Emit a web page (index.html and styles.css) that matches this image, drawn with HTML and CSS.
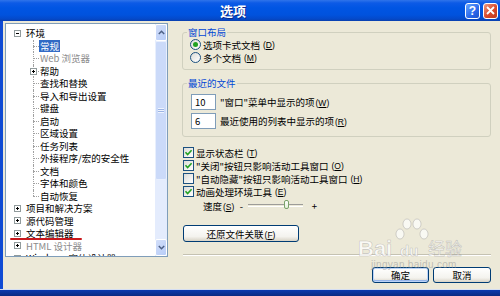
FILE: index.html
```html
<!DOCTYPE html>
<html>
<head>
  <meta charset="UTF-8">
  <meta name="viewport" content="width=device-width, initial-scale=1.0">
  <title>选项</title>
  <link rel="stylesheet" href="styles.css">
</head>
<body>
  <div class="window">
    <div class="titlebar">
      <span class="title">选项</span>
      <div class="caption-btns">
        <span class="cap-btn help">?</span>
        <span class="cap-btn close">
          <svg width="9" height="9" viewBox="0 0 9 9"><path d="M1 1 L8 8 M8 1 L1 8" stroke="#fff" stroke-width="1.8"/></svg>
        </span>
      </div>
    </div>

    <div class="client">
      <div class="main">
        <div class="tree">
          <ul class="tree-list">
            <li class="node"><span class="exp"></span><span class="label">环境</span></li>
            <li>
              <ul class="children">
                <li class="child"><span class="label selected">常规</span></li>
                <li class="child"><span class="label grey">Web 浏览器</span></li>
                <li class="child"><span class="exp plus"></span><span class="label">帮助</span></li>
                <li class="child"><span class="label">查找和替换</span></li>
                <li class="child"><span class="label">导入和导出设置</span></li>
                <li class="child"><span class="label">键盘</span></li>
                <li class="child"><span class="label">启动</span></li>
                <li class="child"><span class="label">区域设置</span></li>
                <li class="child"><span class="label">任务列表</span></li>
                <li class="child"><span class="label">外接程序/宏的安全性</span></li>
                <li class="child"><span class="label">文档</span></li>
                <li class="child"><span class="label">字体和颜色</span></li>
                <li class="child last"><span class="label">自动恢复</span></li>
              </ul>
            </li>
            <li class="node"><span class="exp plus"></span><span class="label">项目和解决方案</span></li>
            <li class="node"><span class="exp plus"></span><span class="label">源代码管理</span></li>
            <li class="node marked"><span class="exp plus"></span><span class="label">文本编辑器</span></li>
            <li class="node"><span class="exp plus"></span><span class="label grey">HTML 设计器</span></li>
            <li class="node"><span class="exp plus"></span><span class="label">Windows 窗体设计器</span></li>
          </ul>
          <div class="scrollbar">
            <div class="sb-btn">
              <svg width="7" height="5" viewBox="0 0 7 5"><path d="M0.8 4 L3.5 1.3 L6.2 4" stroke="#4d6185" stroke-width="1.5" fill="none"/></svg>
            </div>
            <div class="sb-thumb"><span class="grip"></span></div>
            <div class="sb-track"></div>
            <div class="sb-btn">
              <svg width="7" height="5" viewBox="0 0 7 5"><path d="M0.8 1 L3.5 3.7 L6.2 1" stroke="#4d6185" stroke-width="1.5" fill="none"/></svg>
            </div>
          </div>
        </div>

        <div class="panel">
          <fieldset class="group">
            <legend>窗口布局</legend>
            <div class="radio-row"><span class="rb on"></span>选项卡式文档<span class="key">(<u>D</u>)</span></div>
            <div class="radio-row"><span class="rb"></span>多个文档<span class="key">(<u>M</u>)</span></div>
          </fieldset>

          <fieldset class="group recent">
            <legend>最近的文件</legend>
            <div class="num-rows">
              <div class="num-row"><input class="num" type="text" value="10" readonly><span>"窗口"菜单中显示的项<span class="key">(<u>W</u>)</span></span></div>
              <div class="num-row"><input class="num" type="text" value="6" readonly><span>最近使用的列表中显示的项<span class="key">(<u>R</u>)</span></span></div>
            </div>
          </fieldset>

          <div class="checks">
            <div class="check-row"><span class="cb on"><svg width="9" height="9" viewBox="0 0 9 9"><path d="M1.5 4.3 L3.6 6.5 L7.6 2.2" stroke="#21a121" stroke-width="1.6" fill="none"/></svg></span>显示状态栏<span class="key">(<u>T</u>)</span></div>
            <div class="check-row"><span class="cb on"><svg width="9" height="9" viewBox="0 0 9 9"><path d="M1.5 4.3 L3.6 6.5 L7.6 2.2" stroke="#21a121" stroke-width="1.6" fill="none"/></svg></span>"关闭"按钮只影响活动工具窗口<span class="key">(<u>O</u>)</span></div>
            <div class="check-row"><span class="cb"></span>"自动隐藏"按钮只影响活动工具窗口<span class="key">(<u>H</u>)</span></div>
            <div class="check-row"><span class="cb on"><svg width="9" height="9" viewBox="0 0 9 9"><path d="M1.5 4.3 L3.6 6.5 L7.6 2.2" stroke="#21a121" stroke-width="1.6" fill="none"/></svg></span>动画处理环境工具<span class="key">(<u>E</u>)</span></div>
            <div class="speed-row">
              <span>速度<span class="key">(<u>S</u>)</span></span>
              <span class="sign">-</span>
              <div class="slider"><span class="slider-thumb"></span></div>
              <span class="sign">+</span>
            </div>
          </div>

          <button class="btn restore">还原文件关联<span class="key">(<u>F</u>)</span></button>
          <div class="separator"></div>
        </div>
      </div>

      <div class="footer">
        <button class="btn dlg default">确定</button>
        <button class="btn dlg">取消</button>
      </div>
    </div>

    <div class="frame-bottom"></div>

    <div class="watermark">
      <svg class="paw" width="36" height="26" viewBox="0 0 36 26">
        <ellipse cx="6" cy="16" rx="4" ry="5" />
        <ellipse cx="13" cy="6" rx="4" ry="5" />
        <ellipse cx="23" cy="6" rx="4" ry="5" />
        <ellipse cx="30" cy="16" rx="4" ry="5" />
      </svg>
      <span class="wm-bai">Bai</span><span class="wm-du">du</span><span class="wm-jy">经验</span>
      <span class="wm-url">jingyan.baidu.com</span>
    </div>
  </div>
</body>
</html>
```

FILE: styles.css
```css
body {
  margin: 0;
  width: 500px;
  height: 296px;
  overflow: hidden;
  font-family: "Noto Sans CJK SC", "Liberation Sans", sans-serif;
  font-size: 9.5px;
  color: #000;
}

.window {
  position: relative;
  height: 296px;
  display: flex;
  flex-direction: column;
  background: #ece9d8;
}

/* title bar */
.titlebar {
  height: 21px;
  flex-shrink: 0;
  display: flex;
  align-items: center;
  padding-left: 220px;
  box-sizing: border-box;
  background: linear-gradient(#2f74ea 0, #0c5ae6 3px, #0055e3 8px, #0052dd 15px, #0449c9 19px, #0a3fae 21px);
}
.title {
  color: #fff;
  font-weight: bold;
  font-size: 13px;
  line-height: 21px;
  text-shadow: 1px 1px 0 #0b2a8c;
}
.caption-btns {
  margin-left: auto;
  display: flex;
  gap: 3px;
  padding-right: 2px;
}
.cap-btn {
  width: 15px;
  height: 16px;
  box-sizing: border-box;
  border: 1px solid #fff;
  border-radius: 3px;
  display: flex;
  align-items: center;
  justify-content: center;
  color: #fff;
  font: bold 12px "Liberation Sans", sans-serif;
}
.help {
  background: linear-gradient(135deg, #6aa6ff, #2a68ea 60%, #1d52cc);
}
.close {
  background: linear-gradient(135deg, #eb9a83, #d9492c 55%, #bf3a1f);
}

/* mnemonic key, e.g. (D) */
.key {
  font-family: "Liberation Sans", sans-serif;
  font-size: 8.5px;
  margin-left: 1px;
}

/* client area */
.client {
  flex: 1;
  min-height: 0;
  display: flex;
  flex-direction: column;
  border-left: 3px solid #0f4bd4;
}
.main {
  display: flex;
  gap: 14px;
  padding: 2px 0 0 2px;
}

/* tree */
.tree {
  width: 163px;
  height: 234px;
  box-sizing: border-box;
  border: 1px solid #7f9db9;
  background: #fff;
  display: flex;
  overflow: hidden;
}
.tree-list {
  flex: 1;
  list-style: none;
  margin: 0;
  padding: 3px 0 0 8px;
}
.tree-list li {
  line-height: 12.5px;
}
.node {
  display: flex;
  align-items: center;
  height: 12.5px;
  white-space: nowrap;
}
.label {
  padding: 0 1px;
  white-space: nowrap;
}
.node .label {
  margin-left: 4px;
}
.label.selected {
  background: #316ac5;
  color: #fff;
}
.label.grey {
  color: #8c8c8c;
}
.exp {
  position: relative;
  width: 7px;
  height: 7px;
  box-sizing: border-box;
  border: 1px solid #919b9c;
  background: #fff;
  flex-shrink: 0;
}
.exp::before {
  content: "";
  position: absolute;
  left: 1px;
  top: 2px;
  width: 3px;
  height: 1px;
  background: #000;
}
.exp.plus::after {
  content: "";
  position: absolute;
  left: 2px;
  top: 1px;
  width: 1px;
  height: 3px;
  background: #000;
}
.children {
  list-style: none;
  margin: 0 0 0 19px;
  padding: 0;
}
.child {
  position: relative;
  height: 12.5px;
  padding-left: 6px;
  display: flex;
  align-items: center;
}
.child::before {
  content: "";
  position: absolute;
  left: 0;
  top: 0;
  bottom: 0;
  border-left: 1px dotted #a0a0a0;
}
.child.last::before {
  bottom: 50%;
}
.child::after {
  content: "";
  position: absolute;
  left: 0;
  top: 50%;
  width: 6px;
  border-top: 1px dotted #a0a0a0;
}
.child .exp {
  position: absolute;
  left: -3px;
  top: 3px;
  z-index: 1;
}
.marked {
  position: relative;
}
.marked::after {
  content: "";
  position: absolute;
  left: -4px;
  top: 11px;
  width: 72px;
  height: 2px;
  border-radius: 1px;
  background: #c8181c;
}

/* scrollbar */
.scrollbar {
  width: 12px;
  display: flex;
  flex-direction: column;
  background: #e4ecfd;
}
.sb-btn {
  height: 17px;
  flex-shrink: 0;
  box-sizing: border-box;
  border: 1px solid #fff;
  border-radius: 2px;
  background: linear-gradient(135deg, #d2def9, #b8cdf8);
  display: flex;
  align-items: center;
  justify-content: center;
}
.sb-thumb {
  height: 139px;
  box-sizing: border-box;
  border: 1px solid #e8effd;
  border-radius: 2px;
  background: #cbdaf9;
  display: flex;
  align-items: center;
  justify-content: center;
}
.grip {
  width: 6px;
  height: 5px;
  background: repeating-linear-gradient(#eef3fd 0 1px, #9cb4e4 1px 2px);
}
.sb-track {
  flex: 1;
}

/* right panel */
.panel {
  width: 309px;
  display: flex;
  flex-direction: column;
  padding-top: 3px;
}
.group {
  margin: 0;
  padding: 0 7px 5px 7px;
  border: 1px solid #d0d0bf;
  border-radius: 3px;
  min-width: 0;
}
.group legend {
  padding: 0 1px;
  margin-left: -3px;
  color: #0046d5;
  line-height: 12px;
}
.radio-row {
  display: flex;
  align-items: center;
  gap: 2px;
  height: 13px;
  white-space: nowrap;
}
.rb {
  position: relative;
  width: 11px;
  height: 11px;
  box-sizing: border-box;
  border: 1px solid #1c5180;
  border-radius: 50%;
  background: linear-gradient(135deg, #dcdcd7, #fff);
}
.rb.on::after {
  content: "";
  position: absolute;
  left: 2px;
  top: 2px;
  width: 5px;
  height: 5px;
  border-radius: 50%;
  background: #21a121;
}
.recent {
  margin-top: 7px;
  padding-bottom: 7px;
}
.num-rows {
  display: flex;
  flex-direction: column;
  gap: 3px;
  padding-top: 5px;
}
.num-row {
  display: flex;
  align-items: center;
  gap: 4px;
  height: 16px;
  white-space: nowrap;
}
.num {
  width: 25px;
  height: 16px;
  margin: 0 0 0 1px;
  box-sizing: border-box;
  border: 1px solid #7f9db9;
  padding: 0 0 0 3px;
  font: inherit;
  background: #fff;
}
.checks {
  margin-top: 9px;
}
.check-row {
  display: flex;
  align-items: center;
  gap: 2px;
  height: 13px;
  padding-left: 1px;
  white-space: nowrap;
}
.cb {
  width: 11px;
  height: 11px;
  box-sizing: border-box;
  border: 1px solid #1c5180;
  background: linear-gradient(135deg, #dcdcd7, #fff);
  display: flex;
  align-items: center;
  justify-content: center;
}
.speed-row {
  display: flex;
  align-items: center;
  height: 13px;
  margin-top: 1px;
  padding-left: 21px;
  gap: 4px;
}
.sign {
  width: 6px;
  text-align: center;
}
.slider {
  position: relative;
  width: 55px;
  height: 1px;
  border-top: 1px solid #9d9c99;
  border-bottom: 1px solid #fff;
  margin: 0 4px 0 0;
}
.slider-thumb {
  position: absolute;
  left: 36px;
  top: -5px;
  width: 5px;
  height: 9px;
  box-sizing: border-box;
  border: 1px solid #7aa26a;
  border-radius: 2px;
  background: linear-gradient(#fff, #e3efd8);
}

/* buttons */
.btn {
  box-sizing: border-box;
  border: 1px solid #003c74;
  border-radius: 3px;
  background: linear-gradient(#fff, #f4f3ee 70%, #d8d3c6);
  font: inherit;
  color: #000;
  padding: 0;
}
.restore {
  width: 116px;
  height: 17px;
  margin: 13px 0 0 1px;
}
.separator {
  margin-top: 12px;
  margin-left: 1px;
  border-top: 1px solid #c5c2b2;
  border-bottom: 1px solid #fff;
}
.footer {
  display: flex;
  justify-content: flex-end;
  gap: 4px;
  padding: 10px 9px 0 0;
}
.dlg {
  width: 58px;
  height: 16px;
}
.dlg.default {
  width: 57px;
  box-shadow: inset 0 0 0 1px #bcd3f7, inset 0 -1px 0 1px #95b4ea;
}

.frame-bottom {
  height: 7px;
  flex-shrink: 0;
  box-sizing: border-box;
  border-top: 1px solid #d4def3;
  background: linear-gradient(#0b3ab0, #0a2a82);
}

/* watermark over the dialog */
.watermark {
  position: absolute;
  left: 356px;
  top: 216px;
  width: 120px;
  height: 50px;
  pointer-events: none;
  line-height: 1;
  color: rgba(255, 255, 255, 0.75);
  -webkit-text-stroke: 0.6px rgba(140, 140, 140, 0.45);
}
.paw {
  position: absolute;
  left: 38px;
  top: 2px;
  fill: rgba(255, 255, 255, 0.7);
  stroke: rgba(140, 140, 140, 0.45);
  stroke-width: 0.8;
}
.wm-bai {
  position: absolute;
  left: 2px;
  top: 22px;
  font: bold 22px/1 "Liberation Sans", sans-serif;
}
.wm-du {
  position: absolute;
  left: 44px;
  top: 27px;
  font: bold 15px/1 "Liberation Sans", sans-serif;
}
.wm-jy {
  position: absolute;
  left: 72px;
  top: 23px;
  font-size: 17px;
}
.wm-url {
  position: absolute;
  left: 15px;
  top: 44px;
  font: 10px/1 "Liberation Sans", sans-serif;
  color: rgba(150, 150, 150, 0.55);
  -webkit-text-stroke: 0;
  letter-spacing: 0.3px;
}
```
